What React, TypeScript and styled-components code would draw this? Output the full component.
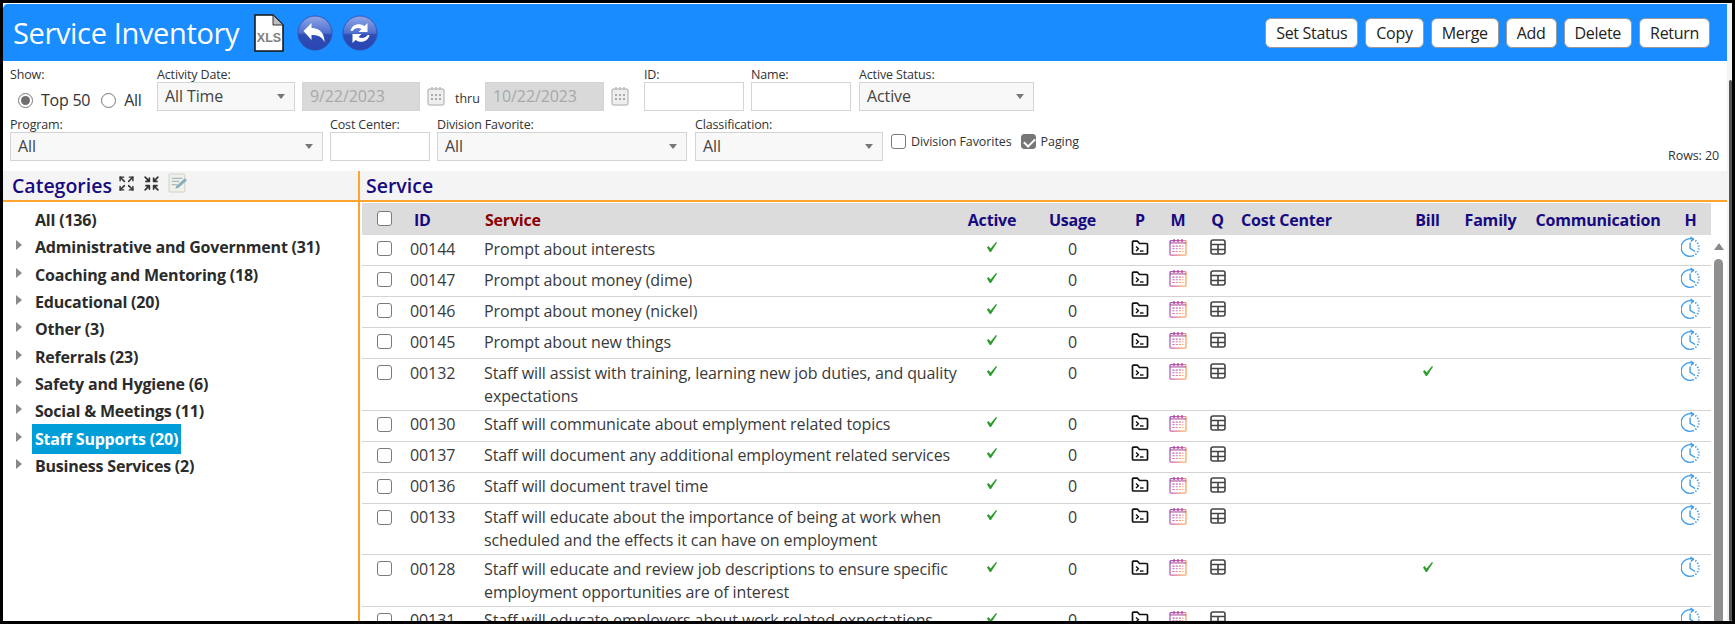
import React from 'react';
import styled, { createGlobalStyle } from 'styled-components';
import { Expand, Shrink } from 'lucide-react';

const FONT = `"Open Sans", "Noto Sans", "Liberation Sans", sans-serif`;

const GlobalStyle = createGlobalStyle`
  html, body { margin: 0; padding: 0; height: 624px; overflow: hidden; background: #000; }
  * { box-sizing: border-box; }
  body { font-family: ${FONT}; color: #2b2b2b; }
`;

// --- Styled Components ---
const Frame = styled.div`
  width: 1735px; height: 624px; border: solid #000; border-width: 3px 3px 3px 3px;
  background: #fff; display: flex; overflow: hidden;
`;
const Page = styled.div` width: 1724px; flex: none; display: flex; flex-direction: column; padding-top: 1px; `;
const OuterScroll = styled.div`
  flex: 1; background: #f3f3f3; position: relative;
  &::after { content: ''; position: absolute; left: 2px; right: 0; top: 77px; bottom: 0; background: #555; border-radius: 3px; }
`;
const Header = styled.header`
  height: 57px; flex: none; background: #198cff; border-top-left-radius: 5px;
  display: flex; align-items: center; padding: 0 17px 0 10px;
`;
const Title = styled.h1` margin: 0 15px 0 0; font-size: 29px; font-weight: 400; color: #fff; letter-spacing: -0.35px; white-space: nowrap; `;
const HeaderIcon = styled.svg<{ $mr?: number }>` display: block; flex: none; margin-right: ${p => p.$mr ?? 8}px; `;
const HeaderActions = styled.div` margin-left: auto; display: flex; gap: 7px; `;
const ActionButton = styled.button`
  height: 30px; padding: 0 10px; background: #fff; border: 1px solid #999; border-radius: 6px;
  font: 400 16px ${FONT}; letter-spacing: -0.3px; color: #222;
`;

const Filters = styled.section` height: 110px; flex: none; padding: 6px 0 0 7px; position: relative; `;
const FilterRow = styled.div` display: flex; height: 49px; margin-bottom: 1px; align-items: flex-start; `;
const Field = styled.div<{ $w: number; $gap?: number }>`
  width: ${p => p.$w}px; margin-right: ${p => p.$gap ?? 7}px; flex: none;
`;
const Label = styled.div` height: 15px; line-height: 15px; font-size: 12.5px; letter-spacing: -0.15px; color: #333; white-space: nowrap; `;
const Control = styled.div`
  height: 29px; border: 1px solid #d4d4d4; background: #fff;
`;
const Select = styled(Control)`
  background: #f8f8f8; padding-left: 7px; font-size: 16px; line-height: 27px; color: #444; position: relative; letter-spacing: -0.1px;
  &::after {
    content: ''; position: absolute; right: 9px; top: 11px;
    border-left: 4.5px solid transparent; border-right: 4.5px solid transparent; border-top: 5px solid #777;
  }
`;
const DateBox = styled(Control)`
  background: #d9d9d9; padding-left: 7px; font-size: 16px; line-height: 27px; color: #a8a8a8; letter-spacing: -0.1px;
`;
const CalIcon = styled.svg` display: block; flex: none; margin: 4px 0 0 7px; `;
const Thru = styled.span` font-size: 12.5px; margin: 23px 8px 0 5px; width: 22px; flex: none; color: #333; `;
const ShowOptions = styled.div` display: flex; align-items: center; height: 28px; margin-top: 4px; padding-left: 8px; font-size: 16px; letter-spacing: -0.25px; color: #333; `;
const Radio = styled.input.attrs({ type: 'radio' })`
  appearance: none; width: 15px; height: 15px; margin: 0 8px 0 0; border: 1px solid #777; border-radius: 50%; background: #fff; position: relative;
  &:checked::after { content: ''; position: absolute; inset: 2px; border-radius: 50%; background: #6f6f6f; }
`;
const RadioText = styled.span` margin-right: 11px; `;
const CheckLabel = styled.label` display: flex; align-items: center; font-size: 12.5px; letter-spacing: -0.08px; color: #333; margin-right: 9px; white-space: nowrap; margin-top: 0; `;
const Check = styled.input.attrs({ type: 'checkbox' })`
  appearance: none; width: 15px; height: 15px; margin: 0; border: 1px solid #7a7a7a; border-radius: 3px; background: #fff; position: relative; flex: none;
  &:checked { background: #767676; border-color: #767676; }
  &:checked::after {
    content: ''; position: absolute; left: 4px; top: 1px; width: 5px; height: 9px;
    border: solid #fff; border-width: 0 2px 2px 0; transform: rotate(45deg);
  }
`;
const RowCheck = styled(Check)` margin: 3.5px 0 1px; `;
const CheckOptions = styled.div` display: flex; height: 29px; align-items: flex-start; padding-top: 16px; margin-left: 1px; `;
const CheckText = styled.span` margin-left: 5px; `;
const RowsCount = styled.div` position: absolute; right: 8px; top: 86px; font-size: 12.5px; letter-spacing: -0.1px; color: #333; `;

const Content = styled.main` flex: 1; min-height: 0; display: flex; overflow: hidden; `;
const Sidebar = styled.aside` width: 355px; flex: none; `;
const PaneHead = styled.div`
  height: 31px; background: #f4f4f4; border-bottom: 2px solid #ffa42e; display: flex; align-items: center; gap: 4px;
  font-size: 19.5px; font-weight: 600; color: #170a80;
`;
const SideHead = styled(PaneHead)` padding-left: 9px; `;
const MainHead = styled(PaneHead)` padding-left: 6px; `;
const HeadIcons = styled.div` display: flex; align-items: center; gap: 8px; margin-left: 2px; color: #333; margin-top: -5px; `;
const Tree = styled.ul` list-style: none; margin: 0; padding: 4.5px 0 0 0; `;
const TreeItem = styled.li` display: flex; align-items: center; height: 27.3px; padding-left: 13px; `;
const Arrow = styled.span<{ $hidden?: boolean }>`
  width: 0; height: 0; margin: -4px 10px 0 0; flex: none;
  border-top: 5px solid transparent; border-bottom: 5px solid transparent; border-left: 6px solid ${p => (p.$hidden ? 'transparent' : '#8a8a8a')};
`;
const TreeLabel = styled.span<{ $selected?: boolean }>`
  font-size: 16px; font-weight: 700; letter-spacing: -0.2px; white-space: nowrap; padding: 0 3px;
  line-height: 30px; height: 30px; position: relative;
  color: ${p => (p.$selected ? '#fff' : '#2b2b2b')};
  background: ${p => (p.$selected ? '#009ed8' : 'transparent')};
`;
const Divider = styled.div` width: 2px; flex: none; background: #ffa42e; `;
const MainPane = styled.section` flex: 1; min-width: 0; display: flex; flex-direction: column; `;
const TableWrap = styled.div` flex: 1; padding: 1px 0 0 2px; position: relative; overflow: hidden; `;
const Table = styled.table` width: 1349px; table-layout: fixed; border-collapse: collapse; `;
const Th = styled.th<{ $w: number; $align?: string; $color?: string; $pl?: number }>`
  width: ${p => p.$w}px; height: 32px; padding: 1px 0 0 ${p => p.$pl ?? 0}px; background: #dcdcdc;
  text-align: ${p => p.$align ?? 'center'}; color: ${p => p.$color ?? '#170a80'};
  font-size: 16px; font-weight: 700; letter-spacing: -0.2px; white-space: nowrap;
`;
const Td = styled.td<{ $align?: string; $pl?: number }>`
  height: 30px; padding: 2.5px 0 2px ${p => p.$pl ?? 0}px; vertical-align: top; text-align: ${p => p.$align ?? 'center'};
  font-size: 16px; line-height: 23px; letter-spacing: -0.1px; color: #3a3a3a; border-bottom: 1px solid #d4d4d4;
`;
const CellIcon = styled.svg<{ $top: number }>` display: inline-block; vertical-align: top; margin-top: ${p => p.$top}px; `;
const ScrollTrack = styled.div`
  position: absolute; right: 0; top: 33px; bottom: 0; width: 16px;  background: #fff;
  &::before { content: ''; position: absolute; left: 3px; top: 8px; border-left: 5px solid transparent; border-right: 5px solid transparent; border-bottom: 7px solid #8a8a8a; }
  &::after { content: ''; position: absolute; left: 3px; width: 9px; top: 24px; bottom: 0; background: #8f8f8f; border-radius: 5px 5px 0 0; }
`;

// Drawn icons
const XlsIcon = () => (
  <HeaderIcon $mr={13} width="30" height="38" viewBox="0 0 30 38">
    <path d="M1 1h18l10 10v26H1z" fill="#fff" stroke="#111" strokeWidth="1.5" />
    <path d="M19 1v10h10z" fill="#bdbdbd" stroke="#333" strokeWidth="1" />
    <text x="15" y="28" textAnchor="middle" fontFamily="Liberation Sans, sans-serif" fontWeight="700" fontSize="12.5" fill="#808080">XLS</text>
  </HeaderIcon>
);

const Globe = ({ id, children }: { id: string; children: React.ReactNode }) => (
  <HeaderIcon $mr={9} width="36" height="36" viewBox="0 0 35 36">
    <defs>
      <linearGradient id={id} x1="0" y1="0" x2="0" y2="1">
        <stop offset="0" stopColor="#8fa6e6" />
        <stop offset="0.5" stopColor="#4f6fd0" />
        <stop offset="0.55" stopColor="#2f4db6" />
        <stop offset="1" stopColor="#2a46b0" />
      </linearGradient>
    </defs>
    <circle cx="17.5" cy="18" r="17" fill={`url(#${id})`} stroke="#2f4aa8" strokeWidth="0.8" />
    {children}
  </HeaderIcon>
);

const CalendarSmall = () => (
  <CalIcon width="18" height="20" viewBox="0 0 18 20" fill="none">
    <rect x="1" y="3" width="16" height="16" rx="2" fill="#eee" stroke="#c4c4c4" strokeWidth="1.5" />
    <path d="M5 1v3M9 1v3M13 1v3" stroke="#bbb" strokeWidth="1.5" />
    <path d="M4 8h2v2H4zM8 8h2v2H8zM12 8h2v2h-2zM4 12h2v2H4zM8 12h2v2H8zM12 12h2v2h-2z" fill="#aaa" />
  </CalIcon>
);

const FolderIcon = () => (
  <CellIcon $top={2} width="18" height="16" viewBox="0 0 18 16" fill="none" stroke="#111" strokeWidth="1.7" strokeLinejoin="round">
    <path d="M1.5 13V2.2c0-.6.4-1 1-1h4l2 2.3h7c.6 0 1 .4 1 1V13c0 .6-.4 1-1 1h-13c-.6 0-1-.4-1-1z" />
    <path d="M5 6.5 7.5 8.7 5 11" strokeWidth="1.4" />
    <path d="M9 11h3.5" strokeWidth="1.4" />
  </CellIcon>
);

const CalendarIcon = () => (
  <CellIcon $top={0.5} width="18" height="18" viewBox="0 0 18 20" fill="none" preserveAspectRatio="none">
    <defs>
      <linearGradient id="calGrad" x1="0" y1="0" x2="1" y2="0.4">
        <stop offset="0" stopColor="#9b59c9" />
        <stop offset="0.55" stopColor="#d66aa8" />
        <stop offset="1" stopColor="#ffa366" />
      </linearGradient>
    </defs>
    <rect x="1" y="3" width="16" height="16" rx="1" stroke="url(#calGrad)" strokeWidth="1.3" />
    <path d="M1 5.5h16" stroke="#a03a90" strokeWidth="1.1" />
    <path d="M5 1v3.5M9 1v3.5M13 1v3.5" stroke="#b03a8c" strokeWidth="1.2" />
    <path d="M3.5 9h11M3.5 12h11M3.5 15h11" stroke="url(#calGrad)" strokeWidth="1.2" strokeDasharray="2 1.2" />
  </CellIcon>
);

const GridIcon = () => (
  <CellIcon $top={1.5} width="16" height="16" viewBox="0 0 16 16" fill="none" stroke="#444" strokeWidth="1.6">
    <rect x="1" y="1" width="14" height="14" rx="2" />
    <path d="M1 5.5h14M1 10.5h14M8 5.5V15" />
  </CellIcon>
);

const HistoryIcon = () => (
  <CellIcon $top={-2} width="20" height="22" viewBox="0 0 22 24" fill="none" stroke="#3d9be6" strokeWidth="1.5">
    <path d="M13 3.4A9.7 9.7 0 1 0 13.5 21.6" />
    <path d="M13 3.4A9.7 9.7 0 0 1 13.5 21.6" strokeWidth="2" strokeDasharray="1.4 1.8" />
    <path d="M10.5 1 13.4 3.4 11 6" />
    <path d="M10 7v6.5l5.5 3.5" />
  </CellIcon>
);

const TickIcon = () => (
  <CellIcon $top={3} width="12" height="12" viewBox="0 0 12 12">
    <path d="M1 6.5 2.6 5 4.6 7.6 10 1l1 .7-6 9.3H3.8z" fill="#2c9c2c" />
  </CellIcon>
);

const NoteIcon = () => (
  <svg width="20" height="20" viewBox="0 0 19 19" fill="none">
    <rect x="1" y="1" width="15" height="17" rx="1" fill="#f0f0ea" stroke="#d2d2c8" />
    <path d="M3.5 5h10M3.5 8h7M3.5 11h5" stroke="#a9b8bd" strokeWidth="1.2" />
    <path d="M7 15l1-3 8-7 2 2-8 7z" fill="#86aebc" />
  </svg>
);

const CATEGORIES = [
  { name: 'All (136)', leaf: true },
  { name: 'Administrative and Government (31)' },
  { name: 'Coaching and Mentoring (18)' },
  { name: 'Educational (20)' },
  { name: 'Other (3)' },
  { name: 'Referrals (23)' },
  { name: 'Safety and Hygiene (6)' },
  { name: 'Social & Meetings (11)' },
  { name: 'Staff Supports (20)', selected: true },
  { name: 'Business Services (2)' },
];

const SERVICES = [
  { id: '00144', text: 'Prompt about interests' },
  { id: '00147', text: 'Prompt about money (dime)' },
  { id: '00146', text: 'Prompt about money (nickel)' },
  { id: '00145', text: 'Prompt about new things' },
  { id: '00132', text: 'Staff will assist with training, learning new job duties, and quality expectations', bill: true },
  { id: '00130', text: 'Staff will communicate about emplyment related topics' },
  { id: '00137', text: 'Staff will document any additional employment related services' },
  { id: '00136', text: 'Staff will document travel time' },
  { id: '00133', text: 'Staff will educate about the importance of being at work when scheduled and the effects it can have on employment' },
  { id: '00128', text: 'Staff will educate and review job descriptions to ensure specific employment opportunities are of interest', bill: true },
  { id: '00131', text: 'Staff will educate employers about work related expectations' },
];

const BUTTONS = ['Set Status', 'Copy', 'Merge', 'Add', 'Delete', 'Return'];

function CalendarWrap({ w }: { w: number }) {
  return <Field $w={w} $gap={0}><Label>&nbsp;</Label><CalendarSmall /></Field>;
}

const App = () => (
  <>
    <GlobalStyle />
    <Frame>
      <Page>
        <Header>
          <Title>Service Inventory</Title>
          <XlsIcon />
          <Globe id="undoGrad">
            <path d="M6 16l8-8v5c8 0 13 5 13 14-3-6-7-7-13-7v5z" fill="#fff" />
          </Globe>
          <Globe id="syncGrad">
            <path d="M8 16c1-6 8-9 14-5l3-3v9h-9l3-3c-3-2-7-1-9 2zM27 20c-1 6-8 9-14 5l-3 3v-9h9l-3 3c3 2 7 1 9-2z" fill="#fff" />
          </Globe>
          <HeaderActions>
            {BUTTONS.map(b => <ActionButton key={b}>{b}</ActionButton>)}
          </HeaderActions>
        </Header>

        <Filters>
          <FilterRow>
            <Field $w={140}>
              <Label>Show:</Label>
              <ShowOptions>
                <Radio name="show" defaultChecked /><RadioText>Top 50</RadioText>
                <Radio name="show" /><span>All</span>
              </ShowOptions>
            </Field>
            <Field $w={138}><Label>Activity Date:</Label><Select>All Time</Select></Field>
            <Field $w={118} $gap={0}><Label>&nbsp;</Label><DateBox>9/22/2023</DateBox></Field>
            <CalendarWrap w={30} />
            <Thru>thru</Thru>
            <Field $w={119} $gap={0}><Label>&nbsp;</Label><DateBox>10/22/2023</DateBox></Field>
            <CalendarWrap w={40} />
            <Field $w={100} $gap={7}><Label>ID:</Label><Control /></Field>
            <Field $w={100} $gap={8}><Label>Name:</Label><Control /></Field>
            <Field $w={175}><Label>Active Status:</Label><Select>Active</Select></Field>
          </FilterRow>
          <FilterRow>
            <Field $w={313}><Label>Program:</Label><Select>All</Select></Field>
            <Field $w={100}><Label>Cost Center:</Label><Control /></Field>
            <Field $w={250} $gap={8}><Label>Division Favorite:</Label><Select>All</Select></Field>
            <Field $w={188}><Label>Classification:</Label><Select>All</Select></Field>
            <CheckOptions>
              <CheckLabel><Check /><CheckText>Division Favorites</CheckText></CheckLabel>
              <CheckLabel><Check defaultChecked /><CheckText>Paging</CheckText></CheckLabel>
            </CheckOptions>
          </FilterRow>
          <RowsCount>Rows: 20</RowsCount>
        </Filters>

        <Content>
          <Sidebar>
            <SideHead>
              Categories
              <HeadIcons>
                <Expand size={17} strokeWidth={2} />
                <Shrink size={17} strokeWidth={2.4} />
                <NoteIcon />
              </HeadIcons>
            </SideHead>
            <Tree>
              {CATEGORIES.map(c => (
                <TreeItem key={c.name}>
                  <Arrow $hidden={c.leaf} />
                  <TreeLabel $selected={c.selected}>{c.name}</TreeLabel>
                </TreeItem>
              ))}
            </Tree>
          </Sidebar>
          <Divider />
          <MainPane>
            <MainHead>Service</MainHead>
            <TableWrap>
              <Table>
                <thead>
                  <tr>
                    <Th $w={40} $pl={4}><Check /></Th>
                    <Th $w={76} $align="left" $pl={12}>ID</Th>
                    <Th $w={483} $align="left" $pl={7} $color="#8b0000">Service</Th>
                    <Th $w={62}>Active</Th>
                    <Th $w={99}>Usage</Th>
                    <Th $w={36}>P</Th>
                    <Th $w={40}>M</Th>
                    <Th $w={39}>Q</Th>
                    <Th $w={163} $align="left" $pl={4}>Cost Center</Th>
                    <Th $w={55}>Bill</Th>
                    <Th $w={71}>Family</Th>
                    <Th $w={144}>Communication</Th>
                    <Th $w={41}>H</Th>
                  </tr>
                </thead>
                <tbody>
                  {SERVICES.map(s => (
                    <tr key={s.id}>
                      <Td $pl={4}><RowCheck /></Td>
                      <Td $align="left" $pl={8}>{s.id}</Td>
                      <Td $align="left" $pl={6}>{s.text}</Td>
                      <Td><TickIcon /></Td>
                      <Td>0</Td>
                      <Td><FolderIcon /></Td>
                      <Td><CalendarIcon /></Td>
                      <Td><GridIcon /></Td>
                      <Td />
                      <Td>{s.bill && <TickIcon />}</Td>
                      <Td />
                      <Td />
                      <Td><HistoryIcon /></Td>
                    </tr>
                  ))}
                </tbody>
              </Table>
              <ScrollTrack />
            </TableWrap>
          </MainPane>
        </Content>
      </Page>
      <OuterScroll />
    </Frame>
  </>
);

export default App;
